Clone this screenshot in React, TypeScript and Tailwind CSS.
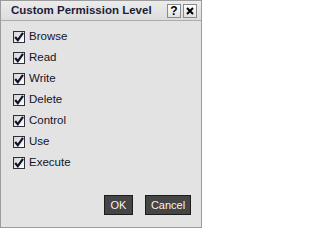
import React from "react";

const items = ["Browse", "Read", "Write", "Delete", "Control", "Use", "Execute"];

const CheckBox = () => (
  <span className="w-[12px] h-[12px] border border-[#2f2f3a] bg-gradient-to-br from-[#d4d4d8] to-[#ffffff] flex items-center justify-center shrink-0">
    <svg width="10" height="10" viewBox="0 0 10 10">
      <path d="M1.2 5 L3.8 8.2 L9 0.8" fill="none" stroke="#141428" strokeWidth="2.2" />
    </svg>
  </span>
);

const TitleButton = ({ children }: { children: React.ReactNode }) => (
  <span className="w-[14px] h-[14px] border border-[#8a8a8a] bg-gradient-to-b from-[#ffffff] to-[#e0e0e0] flex items-center justify-center text-[12px] font-bold text-black leading-none">
    {children}
  </span>
);

const DialogButton = ({ label, width }: { label: string; width: string }) => (
  <button
    className={`${width} h-[20px] bg-[#454545] border border-[#1c1c1c] text-[#f4f4f4] text-[11px] leading-none flex items-center justify-center`}
  >
    {label}
  </button>
);

export default function App() {
  return (
    <div className="w-[202px] h-[229px] bg-white font-['Liberation_Sans',Arial,sans-serif]">
      <div className="w-[202px] h-[228px] bg-[#e3e3e3] border border-[#9c9c9c] flex flex-col">
        <div className="h-[20px] bg-gradient-to-b from-[#ececec] to-[#dcdcdc] border-b border-[#ababab] flex items-center pl-[10px] pr-[4px]">
          <span className="text-[11.5px] font-bold text-[#1c1c3a] flex-1">Custom Permission Level</span>
          <div className="flex gap-[2px]">
            <TitleButton>?</TitleButton>
            <TitleButton>
              <svg width="8" height="8" viewBox="0 0 8 8">
                <path d="M1 1 L7 7 M7 1 L1 7" stroke="#000" strokeWidth="2" />
              </svg>
            </TitleButton>
          </div>
        </div>
        <div className="flex flex-col pt-[5px] pl-[12px]">
          {items.map((item) => (
            <div key={item} className="h-[21px] flex items-center gap-[4px]">
              <CheckBox />
              <span className="text-[11.5px] text-[#14142a]">{item}</span>
            </div>
          ))}
        </div>
        <div className="mt-auto flex justify-end gap-[12px] pr-[10px] pb-[12px]">
          <DialogButton label="OK" width="w-[29px]" />
          <DialogButton label="Cancel" width="w-[46px]" />
        </div>
      </div>
    </div>
  );
}
